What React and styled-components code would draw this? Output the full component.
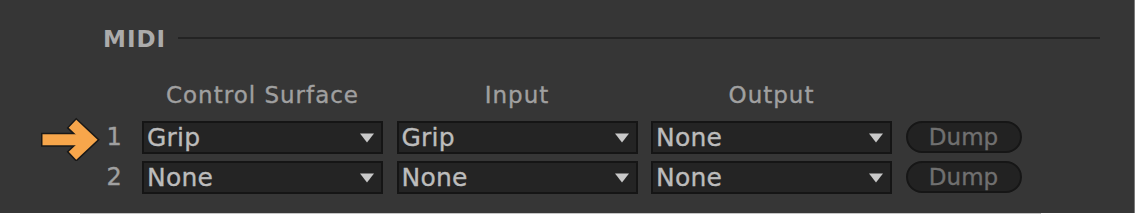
import React from "react";
import styled, { createGlobalStyle } from "styled-components";

const Global = createGlobalStyle`
  html, body { margin: 0; padding: 0; background: #ffffff; }
  body { font-family: "DejaVu Sans", "Liberation Sans", sans-serif; }
`;

const Frame = styled.div`
  width: 1135px;
  height: 214px;
  display: flex;
  flex-direction: column;
`;

const Main = styled.div`
  display: flex;
  height: 213px;
`;

const Panel = styled.section`
  width: 1134px;
  height: 213px;
  box-sizing: border-box;
  background: #363636;
  padding: 26px 34px 0 103px;
  display: flex;
  flex-direction: column;
`;

const EdgeLine = styled.div`
  width: 1px;
  background: #7a7a7a;
`;

const BottomStrip = styled.div`
  height: 1px;
  display: flex;
  background: #ffffff;
  padding-left: 80px;
`;

const BottomShade = styled.div`
  width: 961px;
  background: #c6c6c6;
`;

const SectionHead = styled.div`
  display: flex;
  align-items: center;
  gap: 12px;
  height: 26px;
`;

const SectionTitle = styled.h2`
  margin: 0;
  font-size: 23px;
  line-height: 26px;
  font-weight: bold;
  letter-spacing: 1px;
  color: #ababab;
`;

const Rule = styled.div`
  flex: 1;
  height: 2px;
  margin-bottom: 2px;
  background: #232323;
`;

const Table = styled.div`
  margin: 29px 0 0 -62.5px;
  display: grid;
  grid-template-columns: 88px 241px 241px 241px 116px;
  grid-template-rows: 33px 33px 33px;
  column-gap: 13.5px;
  row-gap: 7px;
`;

const ColHead = styled.div`
  align-self: start;
  text-align: center;
  font-size: 23px;
  line-height: 28px;
  letter-spacing: 1px;
  color: #a0a0a0;
  -webkit-text-stroke: 0.35px currentColor;
`;

const Lead = styled.div`
  display: flex;
  align-items: center;
`;

const ArrowSvg = styled.svg`
  flex: none;
  width: 60px;
  height: 46px;
  margin: -7px 0;
`;

const Spacer = styled.div`
  width: 60px;
  flex: none;
`;

const RowNum = styled.span`
  margin-left: 6px;
  font-size: 24px;
  line-height: 33px;
  color: #a0a0a0;
  -webkit-text-stroke: 0.35px currentColor;
`;

const Select = styled.div`
  box-sizing: border-box;
  height: 33px;
  border: 2px solid #151515;
  background: #242424;
  display: flex;
  align-items: center;
  justify-content: space-between;
  padding: 0 7px 0 3px;
`;

const SelectText = styled.span`
  font-size: 25px;
  line-height: 29px;
  letter-spacing: 0.2px;
  color: #bcbcbc;
  -webkit-text-stroke: 0.35px currentColor;
`;

const Caret = styled.svg`
  width: 14px;
  height: 10px;
  flex: none;
`;

const DumpButton = styled.button`
  box-sizing: border-box;
  height: 32px;
  align-self: start;
  border: 2px solid #161616;
  border-radius: 16px;
  background: #222222;
  color: #707070;
  font-family: "DejaVu Sans", "Liberation Sans", sans-serif;
  font-size: 23px;
  line-height: 28px;
  padding: 0;
  text-align: center;
  -webkit-text-stroke: 0.35px currentColor;
`;

const Arrow = () => (
  <ArrowSvg viewBox="0 0 60 46">
    <g fill="none" stroke="#181818" strokeWidth="14" strokeLinecap="butt" strokeLinejoin="miter">
      <path d="M0 24.8 H48.5" />
      <path d="M30.4 7.8 L48.5 24.8 L30.4 41.8" />
    </g>
    <g fill="none" stroke="#f7a64b" strokeWidth="11" strokeLinecap="butt" strokeLinejoin="miter">
      <path d="M1.5 24.8 H48.5" />
      <path d="M31.5 8.8 L48.5 24.8 L31.5 40.8" />
    </g>
  </ArrowSvg>
);

const Dropdown = ({ value }) => (
  <Select>
    <SelectText>{value}</SelectText>
    <Caret viewBox="0 0 14 10">
      <polygon points="0,0.5 14,0.5 7,9.5" fill="#c9c9c9" />
    </Caret>
  </Select>
);

const rows = [
  { n: 1, surface: "Grip", input: "Grip", output: "None", pointer: true },
  { n: 2, surface: "None", input: "None", output: "None", pointer: false },
];

export default function App() {
  return (
    <>
      <Global />
      <Frame>
        <Main>
          <Panel>
            <SectionHead>
              <SectionTitle>MIDI</SectionTitle>
              <Rule />
            </SectionHead>
            <Table>
              <div />
              <ColHead>Control Surface</ColHead>
              <ColHead>Input</ColHead>
              <ColHead>Output</ColHead>
              <div />
              {rows.map((r) => (
                <React.Fragment key={r.n}>
                  <Lead>
                    {r.pointer ? <Arrow /> : <Spacer />}
                    <RowNum>{r.n}</RowNum>
                  </Lead>
                  <Dropdown value={r.surface} />
                  <Dropdown value={r.input} />
                  <Dropdown value={r.output} />
                  <DumpButton>Dump</DumpButton>
                </React.Fragment>
              ))}
            </Table>
          </Panel>
          <EdgeLine />
        </Main>
        <BottomStrip>
          <BottomShade />
        </BottomStrip>
      </Frame>
    </>
  );
}
